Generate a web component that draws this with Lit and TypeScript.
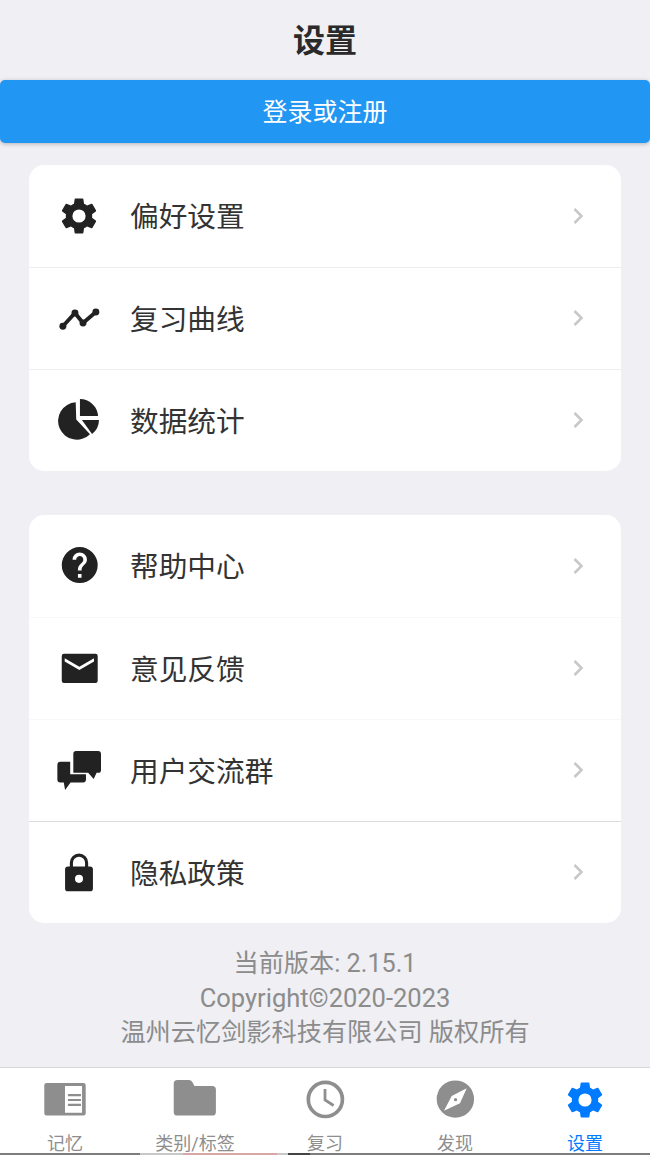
import { LitElement, html, css, svg } from 'lit';
import { customElement } from 'lit/decorators.js';

// material style gear, used by the first row and the active tab
const gearPath =
  'M19.14 12.94c.04-.3.06-.61.06-.94 0-.32-.02-.64-.07-.94l2.03-1.58a.49.49 0 0 0 .12-.61l-1.92-3.32a.49.49 0 0 0-.59-.22l-2.39.96c-.5-.38-1.03-.7-1.62-.94l-.36-2.54a.48.48 0 0 0-.48-.41h-3.84a.48.48 0 0 0-.47.41l-.36 2.54c-.59.24-1.13.57-1.62.94l-2.39-.96a.48.48 0 0 0-.59.22L2.74 8.87a.48.48 0 0 0 .12.61l2.03 1.58c-.05.3-.09.63-.09.94s.02.64.07.94l-2.03 1.58a.49.49 0 0 0-.12.61l1.92 3.32c.12.22.37.29.59.22l2.39-.96c.5.38 1.03.7 1.62.94l.36 2.54c.05.24.24.41.48.41h3.84c.24 0 .44-.17.47-.41l.36-2.54c.59-.24 1.13-.56 1.62-.94l2.39.96c.22.08.47 0 .59-.22l1.92-3.32a.48.48 0 0 0-.12-.61l-2.01-1.58zM12 15.6A3.6 3.6 0 1 1 12 8.4a3.6 3.6 0 0 1 0 7.2z';

const icons = {
  gear: svg`<path d=${gearPath} />`,
  curve: svg`
    <path d="M3.200 16 9.800 8.700l4.400 5.500 7-6" fill="none" stroke="currentColor" stroke-width="2.100" />
    <circle cx="3.200" cy="16" r="1.900" /><circle cx="9.800" cy="8.700" r="1.900" />
    <circle cx="14.200" cy="14.200" r="1.900" /><circle cx="21.200" cy="8.200" r="1.900" />`,
  pie: svg`
    <path d="M10.200 1.800A10.200 10.200 0 1 0 18 19.200l-7.500-8z" />
    <path d="M12.500 0v9.300h9.900A9.900 9.900 0 0 0 12.500 0z" />
    <path d="M13.600 11.400h9.300a10 10 0 0 1-3.800 7.700z" />`,
  help: svg`<path transform="translate(.4 -.5) translate(12 12) scale(.98) translate(-12 -12)" fill-rule="evenodd" d="M12 2a10 10 0 1 0 0 20 10 10 0 0 0 0-20zm1 17h-2v-2h2zm2.070-7.750-.9.920C13.450 12.900 13 13.500 13 15h-2v-.5c0-1.100.450-2.100 1.170-2.830l1.240-1.260A2 2 0 1 0 10 9H8a4 4 0 1 1 8 0c0 .880-.360 1.680-.930 2.250z" />`,
  mail: svg`<path fill-rule="evenodd" d="M3.800 3.650h17.200a1.200 1.200 0 0 1 1.200 1.200V18.400a1.200 1.200 0 0 1-1.200 1.200H3.800a1.200 1.200 0 0 1-1.200-1.200V4.850a1.200 1.200 0 0 1 1.200-1.200zM4.200 6.200v1.700l8 4.700 8-4.700V6.200l-8 4.600z" />`,
  chat: svg`
    <path d="M10.400 1.100H22.400A1.600 1.600 0 0 1 24 2.700V11.400A1.600 1.600 0 0 1 22.400 13H21.600L20 16.300 17 13H8.900V2.600A1.500 1.500 0 0 1 10.400 1.100z" />
    <path d="M1.800 7H7.200V13.800H15.800V16.700A1.600 1.600 0 0 1 14.200 18.300H7.400L4.400 22.400 3.700 18.300H1.800A1.600 1.600 0 0 1 .2 16.700V8.600A1.600 1.600 0 0 1 1.800 7z" />`,
  lock: svg`<path transform="translate(0 -.6)" fill-rule="evenodd" d="M18 9h-1V7a5 5 0 0 0-10 0v2H6a1.600 1.600 0 0 0-1.600 1.600V21A1.600 1.600 0 0 0 6 22.600h12a1.600 1.600 0 0 0 1.600-1.600V10.600A1.600 1.600 0 0 0 18 9zM8.700 7a3.300 3.300 0 0 1 6.600 0v2H8.700zM12 18a2.200 2.200 0 1 1 0-4.400 2.200 2.200 0 0 1 0 4.400z" />`,
  book: svg`<path fill-rule="evenodd" d="M2 2.700h20a1.300 1.300 0 0 1 1.300 1.300v15.200a1.300 1.300 0 0 1-1.300 1.300H2a1.300 1.300 0 0 1-1.300-1.300V4a1.300 1.300 0 0 1 1.300-1.300zM12 4.400v14.500h9.300V4.400zM13.600 8.700h7.100v1.200h-7.100zm0 2.700h7.100v1.200h-7.100zm0 2.700h7.100v1.200h-7.100z" />`,
  folder: svg`<path d="M2.400 1.100h6.300c1 0 1.500.5 2 1.300l1 2h9.700a2 2 0 0 1 2 2V18.500a2 2 0 0 1-2 2H2.400a2 2 0 0 1-2-2V3.100a2 2 0 0 1 2-2z" />`,
  clock: svg`
    <circle cx="12.200" cy="11.700" r="9.300" fill="none" stroke="currentColor" stroke-width="2" />
    <path d="M12 6V12l4.700 3" fill="none" stroke="currentColor" stroke-width="1.500" />`,
  compass: svg`<path fill-rule="evenodd" d="M12.200 1.300a10.200 10.200 0 1 0 0 20.400 10.200 10.200 0 0 0 0-20.400zM18.400 5.600 14.700 13.800 6 17.800 10.200 9.800zM12.300 10.900a.9.900 0 1 0 0 1.800.9.900 0 0 0 0-1.800z" />`,
};

type IconName = keyof typeof icons;
type Row = { icon: IconName; label: string; line?: string };

const group1: Row[] = [
  { icon: 'gear', label: '偏好设置' },
  { icon: 'curve', label: '复习曲线' },
  { icon: 'pie', label: '数据统计' },
];

const group2: Row[] = [
  { icon: 'help', label: '帮助中心', line: 'faint' },
  { icon: 'mail', label: '意见反馈', line: 'faint' },
  { icon: 'chat', label: '用户交流群', line: 'strong' },
  { icon: 'lock', label: '隐私政策' },
];

const tabs: { icon: IconName; label: string; active?: boolean }[] = [
  { icon: 'book', label: '记忆' },
  { icon: 'folder', label: '类别/标签' },
  { icon: 'clock', label: '复习' },
  { icon: 'compass', label: '发现' },
  { icon: 'gear', label: '设置', active: true },
];

@customElement('app-root')
export class AppRoot extends LitElement {
  static styles = css`
    :host {
      display: flex;
      flex-direction: column;
      position: relative;
      height: 1155px;
      background: #efeff4;
      color: #222;
      font-family: Roboto, 'Noto Sans CJK SC', sans-serif;
      overflow: hidden;
    }

    .title {
      height: 80px;
      padding-bottom: 4px;
      box-sizing: border-box;
      display: flex;
      align-items: center;
      justify-content: center;
      font-size: 32px;
      font-weight: 700;
      color: #2a2a2a;
    }

    .login {
      height: 63px;
      padding-bottom: 3px;
      box-sizing: border-box;
      display: flex;
      align-items: center;
      justify-content: center;
      background: #2196f3;
      border-radius: 5px;
      color: #fff;
      font-size: 25px;
      box-shadow: 0 1px 4px rgba(0, 0, 0, 0.25);
    }

    .card {
      margin: 22px 29px 0;
      background: #fff;
      border-radius: 15px;
      overflow: hidden;
    }

    .card + .card {
      margin-top: 44px;
    }

    .row {
      height: 102px;
      display: flex;
      align-items: center;
      border-bottom: 1px solid #eee;
      box-sizing: border-box;
      font-size: 28.7px;
      color: #333;
    }

    .row:first-child {
      height: 103px;
    }

    .row:last-child {
      height: 101px;
      border-bottom: none;
    }

    .row.faint {
      border-bottom-color: #f8f8f8;
    }

    .row.strong {
      border-bottom-color: #ddd;
    }

    .row-icon {
      width: 44px;
      height: 44px;
      margin: 0 29px 0 28px;
      color: #222;
      fill: currentColor;
      flex: none;
    }

    .label {
      flex: 1;
      padding-bottom: 3px;
    }

    .chevron {
      width: 12px;
      height: 18px;
      margin: 0 37px 1px 0;
      fill: none;
      stroke: #c8c8c8;
      stroke-width: 2.6;
    }

    .footer {
      margin-top: 24px;
      text-align: center;
      font-size: 25.2px;
      line-height: 34.5px;
      color: #8c8c8c;
    }

    .copyright {
      margin: -1px 0 1px;
      font-size: 25.5px;
    }

    .tabbar {
      margin-top: auto;
      height: 88px;
      display: grid;
      grid-template-columns: repeat(5, 1fr);
      background: #fff;
      border-top: 1px solid #d6d6d6;
      box-sizing: border-box;
    }

    .tab {
      display: flex;
      flex-direction: column;
      align-items: center;
      color: #8e8e8e;
      font-size: 18px;
      line-height: 24px;
      padding-top: 10px;
    }

    .tab.active {
      color: #007aff;
    }

    .tab svg {
      width: 44px;
      height: 44px;
      fill: currentColor;
      margin-bottom: 10px;
    }

    /* uneven strip along the bottom edge that cuts off the tab labels */
    .edge {
      position: absolute;
      left: 0;
      right: 0;
      bottom: 0;
      height: 2px;
      background: linear-gradient(
        to right,
        #7d7d7d 0 140px,
        #c8c8c8 140px 183px,
        #d9a6a6 183px 277px,
        #c8c8c8 277px 288px,
        #444 288px 310px,
        #7d7d7d 310px
      );
    }
  `;

  renderRow(row: Row) {
    return html`
      <div class="row ${row.line ?? ''}">
        <svg class="row-icon" viewBox="0 0 24 24">${icons[row.icon]}</svg>
        <span class="label">${row.label}</span>
        <svg class="chevron" viewBox="0 0 12 18"><path d="M2.500 2l7 7-7 7" /></svg>
      </div>
    `;
  }

  render() {
    return html`
      <div class="title">设置</div>
      <div class="login">登录或注册</div>
      <div class="card">${group1.map((r) => this.renderRow(r))}</div>
      <div class="card">${group2.map((r) => this.renderRow(r))}</div>
      <div class="footer">
        <div>当前版本: 2.15.1</div>
        <div class="copyright">Copyright©2020-2023</div>
        <div>温州云忆剑影科技有限公司 版权所有</div>
      </div>
      <div class="tabbar">
        ${tabs.map(
          (t) => html`
            <div class="tab ${t.active ? 'active' : ''}">
              <svg viewBox="0 0 24 24">${icons[t.icon]}</svg>
              <span>${t.label}</span>
            </div>
          `
        )}
      </div>
      <div class="edge"></div>
    `;
  }
}
